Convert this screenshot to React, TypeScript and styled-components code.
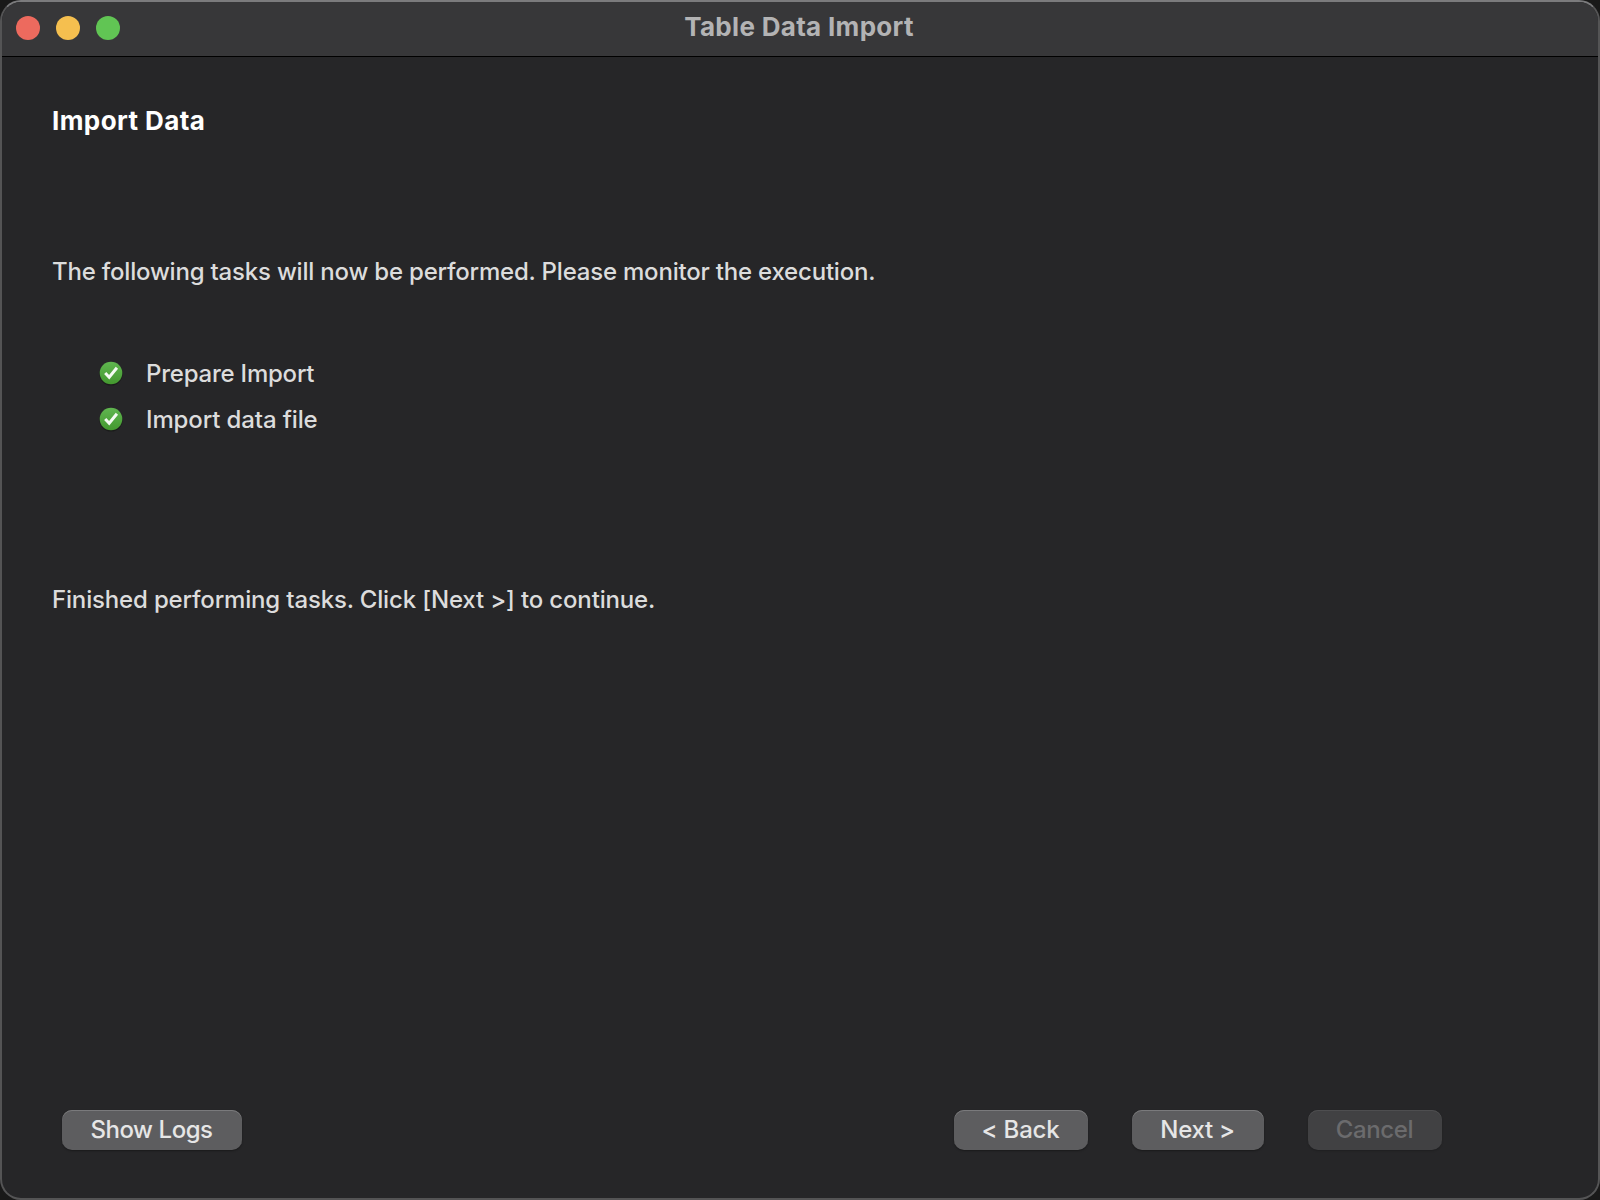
import React from "react";
import styled, { createGlobalStyle } from "styled-components";

const GlobalStyle = createGlobalStyle`
  * { box-sizing: border-box; }
  body { margin: 0; background: #191919; }
`;

const Window = styled.div`
  width: 1600px;
  height: 1200px;
  display: flex;
  flex-direction: column;
  overflow: hidden;
  border: 2px solid #545455;
  border-top-color: #7b7b7d;
  border-radius: 21px;
  background: #262628;
  color: #dcdcdc;
  font-family: Inter, "Liberation Sans", sans-serif;
  font-size: 24px;
  font-weight: 500;
  line-height: 30px;
  white-space: nowrap;
`;

const TitleBar = styled.header`
  flex: none;
  height: 55px;
  display: grid;
  grid-template-columns: 1fr auto 1fr;
  padding: 0 16px 0 14px;
  background: #373739;
  border-bottom: 1px solid #000;
`;

const Lights = styled.div`
  display: flex;
  align-items: center;
  gap: 16px;
  height: 52px;
`;

const Light = styled.span<{ $color: string }>`
  width: 24px;
  height: 24px;
  border-radius: 50%;
  background: ${(p) => p.$color};
`;

const Title = styled.h1`
  margin: 0;
  padding-top: 10px;
  font-size: 26px;
  font-weight: 700;
  line-height: 30px;
  letter-spacing: 0.31px;
  color: #b3b3b4;
`;

const Body = styled.main`
  flex: 1;
  display: flex;
  flex-direction: column;
  padding: 49px 50px 0;
`;

const Heading = styled.h2`
  margin: 0 0 121px;
  font-size: 26px;
  font-weight: 700;
  line-height: 30px;
  letter-spacing: 0.42px;
  color: #fff;
`;

const Text = styled.p<{ $spacing: number }>`
  margin: 0;
  letter-spacing: ${(p) => p.$spacing}px;
`;

const Tasks = styled.ul`
  list-style: none;
  margin: 72px 0 150px;
  padding: 0 0 0 46px;
  display: flex;
  flex-direction: column;
  gap: 16px;
`;

const Task = styled.li<{ $spacing: number }>`
  display: flex;
  align-items: center;
  gap: 22px;
  height: 30px;
  letter-spacing: ${(p) => p.$spacing}px;
`;

const Footer = styled.footer`
  display: flex;
  justify-content: space-between;
  height: 88px;
  padding: 0 156px 0 60px;
`;

const Actions = styled.div`
  display: flex;
  gap: 44px;
`;

const Button = styled.button<{ $width: number; $spacing: number }>`
  width: ${(p) => p.$width}px;
  height: 40px;
  padding: 0 1px 0 0;
  border: 0;
  border-radius: 10px;
  background: #5d5d5f;
  box-shadow: inset 0 1px 0 #7a7a7c, 0 1px 2px rgba(0, 0, 0, 0.35);
  color: #e6e6e6;
  font: inherit;
  letter-spacing: ${(p) => p.$spacing}px;

  &:disabled {
    background: #414143;
    box-shadow: inset 0 1px 0 #4e4e50, 0 1px 2px rgba(0, 0, 0, 0.2);
    color: #6b6b6d;
  }
`;

const Check = ({ id }: { id: string }) => (
  <svg width="26" height="28" viewBox="0 0 26 28">
    <defs>
      <linearGradient id={id} x1="0" y1="0" x2="0" y2="1">
        <stop offset="0" stopColor="#60b650" />
        <stop offset="1" stopColor="#43982f" />
      </linearGradient>
    </defs>
    <circle cx="13" cy="14" r="11.6" fill="#1b1c1b" />
    <circle cx="13" cy="13" r="11.3" fill={`url(#${id})`} />
    <path d="M7.2 13 L11.2 17.2 L18.9 7.8" fill="none" stroke="#f4faf2" strokeWidth="3" />
  </svg>
);

export default function App() {
  return (
    <>
      <GlobalStyle />
      <Window>
        <TitleBar>
          <Lights>
            <Light $color="#ed6a5e" />
            <Light $color="#f5bf4f" />
            <Light $color="#61c554" />
          </Lights>
          <Title>Table Data Import</Title>
        </TitleBar>
        <Body>
          <Heading>Import Data</Heading>
          <Text $spacing={-0.205}>
            The following tasks will now be performed. Please monitor the execution.
          </Text>
          <Tasks>
            <Task $spacing={-0.22}>
              <Check id="prepare" />
              <span>Prepare Import</span>
            </Task>
            <Task $spacing={-0.13}>
              <Check id="import" />
              <span>Import data file</span>
            </Task>
          </Tasks>
          <Text $spacing={-0.165}>Finished performing tasks. Click [Next &gt;] to continue.</Text>
        </Body>
        <Footer>
          <Button $width={180} $spacing={-0.45}>Show Logs</Button>
          <Actions>
            <Button $width={134} $spacing={-0.15}>&lt; Back</Button>
            <Button $width={132} $spacing={-0.3}>Next &gt;</Button>
            <Button $width={134} $spacing={-0.4} disabled>Cancel</Button>
          </Actions>
        </Footer>
      </Window>
    </>
  );
}
